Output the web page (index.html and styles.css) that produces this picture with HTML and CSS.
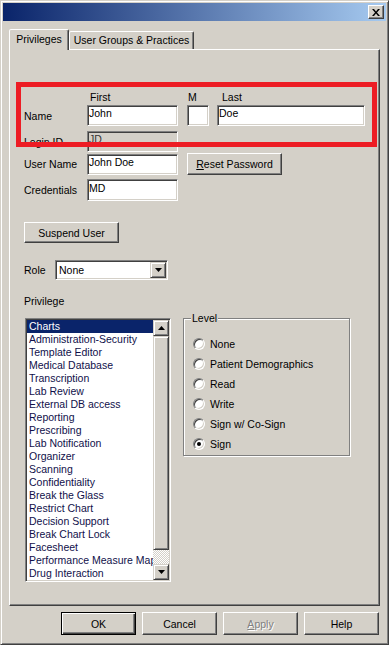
FILE: index.html
```html
<!DOCTYPE html>
<html lang="en">
<head>
    <meta charset="UTF-8">
    <meta name="viewport" content="width=device-width, initial-scale=1.0">
    <title>User Properties</title>
    <link rel="stylesheet" href="styles.css">
</head>
<body>

    <div class="window">
        <div class="titlebar">
            <button class="close-btn">
                <svg width="8" height="7" viewBox="0 0 8 7"><path d="M0 0h2l2 2.4L6 0h2L5 3.5 8 7H6L4 4.6 2 7H0l3-3.5z" fill="#000"/></svg>
            </button>
        </div>

        <div class="content">
            <div class="tabs">
                <div class="tab active">Privileges</div>
                <div class="tab">User Groups &amp; Practices</div>
            </div>

            <div class="panel">
                <div class="annotation"></div>

                <div class="name-head">
                    <span class="col-first">First</span>
                    <span class="col-middle">M</span>
                    <span class="col-last">Last</span>
                </div>

                <div class="row name-row">
                    <span class="lbl">Name</span>
                    <input class="text w-first" type="text" value="John">
                    <input class="text w-middle" type="text" value="">
                    <input class="text w-last" type="text" value="Doe">
                </div>

                <div class="row login-row">
                    <span class="lbl">Login ID</span>
                    <input class="text w-first" type="text" value="JD" disabled>
                </div>

                <div class="row user-row">
                    <span class="lbl">User Name</span>
                    <input class="text w-first" type="text" value="John Doe">
                    <button class="btn reset"><u>R</u>eset Password</button>
                </div>

                <div class="row cred-row">
                    <span class="lbl">Credentials</span>
                    <input class="text w-first tall" type="text" value="MD">
                </div>

                <button class="btn suspend">Suspend User</button>

                <div class="row role-row">
                    <span class="lbl role-lbl">Role</span>
                    <div class="combo">
                        <span class="combo-value">None</span>
                        <span class="combo-btn">
                            <svg width="7" height="4" viewBox="0 0 7 4"><path d="M0 0h7L3.5 4z" fill="#000"/></svg>
                        </span>
                    </div>
                </div>

                <div class="section-lbl">Privilege</div>

                <div class="privileges">
                    <div class="listbox">
                        <ul class="items">
                            <li class="selected">Charts</li>
                            <li>Administration-Security</li>
                            <li>Template Editor</li>
                            <li>Medical Database</li>
                            <li>Transcription</li>
                            <li>Lab Review</li>
                            <li>External DB access</li>
                            <li>Reporting</li>
                            <li>Prescribing</li>
                            <li>Lab Notification</li>
                            <li>Organizer</li>
                            <li>Scanning</li>
                            <li>Confidentiality</li>
                            <li>Break the Glass</li>
                            <li>Restrict Chart</li>
                            <li>Decision Support</li>
                            <li>Break Chart Lock</li>
                            <li>Facesheet</li>
                            <li>Performance Measure Map</li>
                            <li>Drug Interaction</li>
                        </ul>
                        <div class="scrollbar">
                            <span class="sb-btn">
                                <svg width="7" height="4" viewBox="0 0 7 4"><path d="M3.5 0 7 4H0z" fill="#000"/></svg>
                            </span>
                            <span class="sb-thumb"></span>
                            <span class="sb-track"></span>
                            <span class="sb-btn">
                                <svg width="7" height="4" viewBox="0 0 7 4"><path d="M0 0h7L3.5 4z" fill="#000"/></svg>
                            </span>
                        </div>
                    </div>

                    <fieldset class="level">
                        <legend>Level</legend>
                        <label class="radio-row"><span class="radio"></span>None</label>
                        <label class="radio-row"><span class="radio"></span>Patient Demographics</label>
                        <label class="radio-row"><span class="radio"></span>Read</label>
                        <label class="radio-row"><span class="radio"></span>Write</label>
                        <label class="radio-row"><span class="radio"></span>Sign w/ Co-Sign</label>
                        <label class="radio-row"><span class="radio checked"></span>Sign</label>
                    </fieldset>
                </div>
            </div>

            <div class="actions">
                <button class="btn action default">OK</button>
                <button class="btn action">Cancel</button>
                <button class="btn action disabled"><u>A</u>pply</button>
                <button class="btn action">Help</button>
            </div>
        </div>
    </div>

</body>
</html>
```

FILE: styles.css
```css
body {
    margin: 0;
    background-color: #d4d0c8;
    font-family: "Liberation Sans", Arial, sans-serif;
    font-size: 10.5px;
    color: #000;
}
.window {
    width: 389px;
    height: 645px;
    box-sizing: border-box;
    display: flex;
    flex-direction: column;
    padding: 2px;
    background: #d4d0c8;
    border: 1px solid;
    border-color: #d4d0c8 #404040 #404040 #d4d0c8;
    box-shadow: inset 1px 1px #fff, inset -1px -1px #808080;
}
.titlebar {
    height: 18px;
    display: flex;
    justify-content: flex-end;
    align-items: center;
    padding-right: 2px;
    background: linear-gradient(to right, #0a246a, #a6caf0);
}
.close-btn {
    width: 16px;
    height: 14px;
    padding: 0;
    display: flex;
    align-items: center;
    justify-content: center;
    background: #d4d0c8;
    border: 1px solid;
    border-color: #fff #404040 #404040 #fff;
    box-shadow: inset -1px -1px #808080;
}
.content {
    flex: 1;
    display: flex;
    flex-direction: column;
    padding: 8px 7px 7px 6px;
}

/* tabs */
.tabs {
    display: flex;
    align-items: flex-end;
    height: 20px;
    position: relative;
    z-index: 1;
}
.tab {
    box-sizing: border-box;
    height: 18px;
    width: 125px;
    padding-top: 2px;
    line-height: 13px;
    text-align: center;
    background: #d4d0c8;
    border: 1px solid;
    border-bottom: none;
    border-color: #fff #404040 transparent #fff;
    box-shadow: inset -1px 0 #808080;
    border-radius: 2px 2px 0 0;
}
.tab.active {
    width: 60px;
    height: 21px;
    padding-top: 3px;
    margin-bottom: -1px;
}
.panel {
    flex: 1;
    position: relative;
    padding: 41px 14px 0 14px;
    border: 1px solid;
    border-color: #fff #404040 #404040 #fff;
    box-shadow: inset -1px -1px #808080;
    margin-right: -1px;
}
.annotation {
    position: absolute;
    left: 6px;
    top: 32px;
    width: 361px;
    height: 65px;
    box-sizing: border-box;
    border: 5px solid #ed1c24;
    z-index: 2;
}

/* form rows */
.name-head {
    display: flex;
    line-height: 13px;
    padding-left: 63px;
}
.col-first {
    width: 97px;
    padding-left: 3px;
}
.col-middle {
    width: 29px;
    padding-left: 1px;
}
.col-last {
    padding-left: 5px;
}
.row {
    display: flex;
    align-items: center;
}
.lbl {
    width: 63px;
}
.name-row {
    margin-top: 1px;
}
.login-row {
    margin-top: 5px;
}
.user-row {
    margin-top: 1px;
}
.cred-row {
    margin-top: 4px;
}
.text {
    height: 21px;
    box-sizing: border-box;
    margin: 0;
    padding: 0 1px 5px 1px;
    font: inherit;
    color: #000;
    background: #fff;
    border: 1px solid;
    border-color: #808080 #fff #fff #808080;
    box-shadow: inset 1px 1px #404040, inset -1px -1px #d4d0c8;
    outline: none;
}
.text.tall {
    height: 22px;
}
.text:disabled {
    background: #d4d0c8;
    color: #333;
}
.w-first {
    width: 91px;
}
.w-middle {
    width: 22px;
    margin-left: 9px;
}
.w-last {
    width: 148px;
    margin-left: 8px;
}

/* buttons */
.btn {
    box-sizing: border-box;
    margin: 0;
    padding: 0;
    font: inherit;
    color: #000;
    background: #d4d0c8;
    border: 1px solid;
    border-color: #fff #404040 #404040 #fff;
    box-shadow: inset -1px -1px #808080;
}
.reset {
    width: 95px;
    height: 22px;
    margin-left: 9px;
}
.suspend {
    display: block;
    width: 95px;
    height: 21px;
    margin-top: 21px;
}
.actions {
    display: flex;
    justify-content: flex-end;
    gap: 6px;
    margin-top: 6px;
}
.action {
    width: 75px;
    height: 23px;
}
.action.default {
    border: 1px solid #000;
    box-shadow: inset 1px 1px #fff, inset -1px -1px #404040, inset -2px -2px #808080;
}
.action.disabled {
    color: #808080;
    text-shadow: 1px 1px #fff;
}

/* role combo */
.role-row {
    margin-top: 17px;
}
.role-lbl {
    width: 31px;
}
.combo {
    width: 113px;
    height: 20px;
    box-sizing: border-box;
    display: flex;
    align-items: center;
    background: #fff;
    border: 1px solid;
    border-color: #808080 #fff #fff #808080;
    box-shadow: inset 1px 1px #404040, inset -1px -1px #d4d0c8;
    padding: 1px;
}
.combo-value {
    flex: 1;
    padding-left: 2px;
}
.combo-btn {
    width: 16px;
    height: 16px;
    box-sizing: border-box;
    display: flex;
    align-items: center;
    justify-content: center;
    background: #d4d0c8;
    border: 1px solid;
    border-color: #d4d0c8 #404040 #404040 #d4d0c8;
    box-shadow: inset 1px 1px #fff, inset -1px -1px #808080;
}
.section-lbl {
    margin-top: 15px;
    line-height: 13px;
}

/* privilege list + level */
.privileges {
    display: flex;
    align-items: flex-start;
    margin-top: 10px;
}
.listbox {
    display: flex;
    width: 146px;
    height: 264px;
    box-sizing: border-box;
    margin-left: 1px;
    padding: 1px;
    background: #fff;
    border: 1px solid;
    border-color: #808080 #fff #fff #808080;
    box-shadow: inset 1px 1px #404040, inset -1px -1px #d4d0c8;
}
.items {
    list-style: none;
    margin: 0;
    padding: 0;
    width: 126px;
    overflow: hidden;
}
.items li {
    height: 13px;
    line-height: 13px;
    padding-left: 2px;
    white-space: nowrap;
    color: #10104a;
}
.items li.selected {
    background: #0a246a;
    color: #fff;
}
.scrollbar {
    width: 16px;
    display: flex;
    flex-direction: column;
}
.sb-btn, .sb-thumb {
    box-sizing: border-box;
    background: #d4d0c8;
    border: 1px solid;
    border-color: #d4d0c8 #404040 #404040 #d4d0c8;
    box-shadow: inset 1px 1px #fff, inset -1px -1px #808080;
}
.sb-btn {
    height: 16px;
    display: flex;
    align-items: center;
    justify-content: center;
}
.sb-thumb {
    height: 214px;
}
.sb-track {
    flex: 1;
    background: repeating-conic-gradient(#fff 0 25%, #d4d0c8 0 50%) 0 0 / 2px 2px;
}
.level {
    width: 167px;
    box-sizing: border-box;
    margin: -6px 0 0 12px;
    padding: 9px 7px 1px 7px;
    min-width: 0;
    border: 1px solid #808080;
    box-shadow: inset 1px 1px #fff, 1px 1px #fff;
}
.level legend {
    padding: 0 1px;
    line-height: 13px;
    background: #d4d0c8;
}
.radio-row {
    display: flex;
    align-items: center;
    gap: 5px;
    height: 20px;
    padding-left: 2px;
}
.radio {
    width: 12px;
    height: 12px;
    box-sizing: border-box;
    position: relative;
    border-radius: 50%;
    background: #fff;
    border: 1px solid;
    border-color: #808080 #fff #fff #808080;
    box-shadow: inset 1px 1px #404040, inset -1px -1px #d4d0c8;
}
.radio.checked::after {
    content: "";
    position: absolute;
    left: 3px;
    top: 3px;
    width: 4px;
    height: 4px;
    border-radius: 50%;
    background: #000;
}
```
